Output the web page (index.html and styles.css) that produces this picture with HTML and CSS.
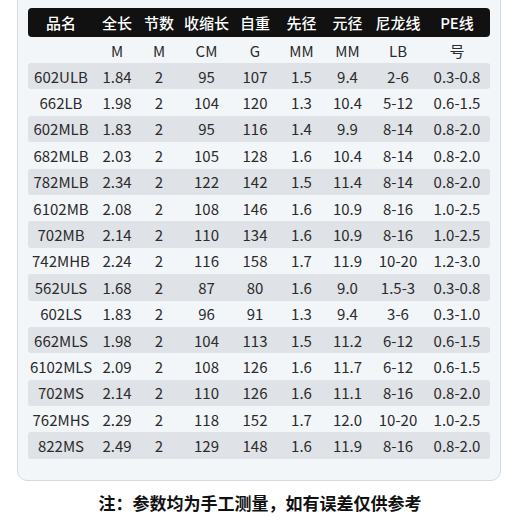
FILE: index.html
```html
<!DOCTYPE html>
<html lang="zh-CN">
<head>
<meta charset="utf-8">
<title>参数表</title>
<link rel="stylesheet" href="styles.css">
</head>
<body>
<div class="card">
  <div class="table">
    <div class="row head"><span>品名</span><span>全长</span><span>节数</span><span>收缩长</span><span>自重</span><span>先径</span><span>元径</span><span>尼龙线</span><span>PE线</span></div>
    <div class="row units"><span></span><span>M</span><span>M</span><span>CM</span><span>G</span><span>MM</span><span>MM</span><span>LB</span><span>号</span></div>
    <div class="row band"><span>602ULB</span><span>1.84</span><span>2</span><span>95</span><span>107</span><span>1.5</span><span>9.4</span><span>2-6</span><span>0.3-0.8</span></div>
    <div class="row"><span>662LB</span><span>1.98</span><span>2</span><span>104</span><span>120</span><span>1.3</span><span>10.4</span><span>5-12</span><span>0.6-1.5</span></div>
    <div class="row band"><span>602MLB</span><span>1.83</span><span>2</span><span>95</span><span>116</span><span>1.4</span><span>9.9</span><span>8-14</span><span>0.8-2.0</span></div>
    <div class="row"><span>682MLB</span><span>2.03</span><span>2</span><span>105</span><span>128</span><span>1.6</span><span>10.4</span><span>8-14</span><span>0.8-2.0</span></div>
    <div class="row band"><span>782MLB</span><span>2.34</span><span>2</span><span>122</span><span>142</span><span>1.5</span><span>11.4</span><span>8-14</span><span>0.8-2.0</span></div>
    <div class="row"><span>6102MB</span><span>2.08</span><span>2</span><span>108</span><span>146</span><span>1.6</span><span>10.9</span><span>8-16</span><span>1.0-2.5</span></div>
    <div class="row band"><span>702MB</span><span>2.14</span><span>2</span><span>110</span><span>134</span><span>1.6</span><span>10.9</span><span>8-16</span><span>1.0-2.5</span></div>
    <div class="row"><span>742MHB</span><span>2.24</span><span>2</span><span>116</span><span>158</span><span>1.7</span><span>11.9</span><span>10-20</span><span>1.2-3.0</span></div>
    <div class="row band"><span>562ULS</span><span>1.68</span><span>2</span><span>87</span><span>80</span><span>1.6</span><span>9.0</span><span>1.5-3</span><span>0.3-0.8</span></div>
    <div class="row"><span>602LS</span><span>1.83</span><span>2</span><span>96</span><span>91</span><span>1.3</span><span>9.4</span><span>3-6</span><span>0.3-1.0</span></div>
    <div class="row band"><span>662MLS</span><span>1.98</span><span>2</span><span>104</span><span>113</span><span>1.5</span><span>11.2</span><span>6-12</span><span>0.6-1.5</span></div>
    <div class="row"><span>6102MLS</span><span>2.09</span><span>2</span><span>108</span><span>126</span><span>1.6</span><span>11.7</span><span>6-12</span><span>0.6-1.5</span></div>
    <div class="row band"><span>702MS</span><span>2.14</span><span>2</span><span>110</span><span>126</span><span>1.6</span><span>11.1</span><span>8-16</span><span>0.8-2.0</span></div>
    <div class="row"><span>762MHS</span><span>2.29</span><span>2</span><span>118</span><span>152</span><span>1.7</span><span>12.0</span><span>10-20</span><span>1.0-2.5</span></div>
    <div class="row band"><span>822MS</span><span>2.49</span><span>2</span><span>129</span><span>148</span><span>1.6</span><span>11.9</span><span>8-16</span><span>0.8-2.0</span></div>
  </div>
</div>
<p class="note">注：参数均为手工测量，如有误差仅供参考</p>
</body>
</html>
```
FILE: styles.css
```css
html, body {
  margin: 0;
  padding: 0;
  background: #ffffff;
}
body {
  width: 520px;
  height: 520px;
  overflow: hidden;
  font-family: "Noto Sans CJK SC", "Noto Sans", sans-serif;
  color: #2b2b2b;
}
.card {
  box-sizing: border-box;
  width: 484px;
  margin: -12px 0 0 17px;
  padding: 19px 10px 21px 10px;
  background: #f3f6f9;
  border: 1px solid #d6dade;
  border-radius: 10px;
}
.table {
  display: flex;
  flex-direction: column;
}
.row {
  display: grid;
  grid-template-columns: 66px 46px 38px 57px 40px 53px 39px 62px 56px;
  height: 26.4px;
  align-items: center;
  font-size: 15px;
  line-height: 1;
  border-radius: 3px;
}
.row span {
  text-align: center;
  white-space: nowrap;
}
.row.head {
  height: 29px;
  background: #111111;
  color: #ffffff;
  font-weight: 500;
  border-radius: 4px;
}
.row.units {
  height: 26px;
}
.row.band {
  background: #dfe2e6;
}
.note {
  margin: 10px 0 0 0;
  height: 24px;
  line-height: 24px;
  text-align: center;
  font-size: 17px;
  font-weight: 700;
  color: #111111;
}
```
